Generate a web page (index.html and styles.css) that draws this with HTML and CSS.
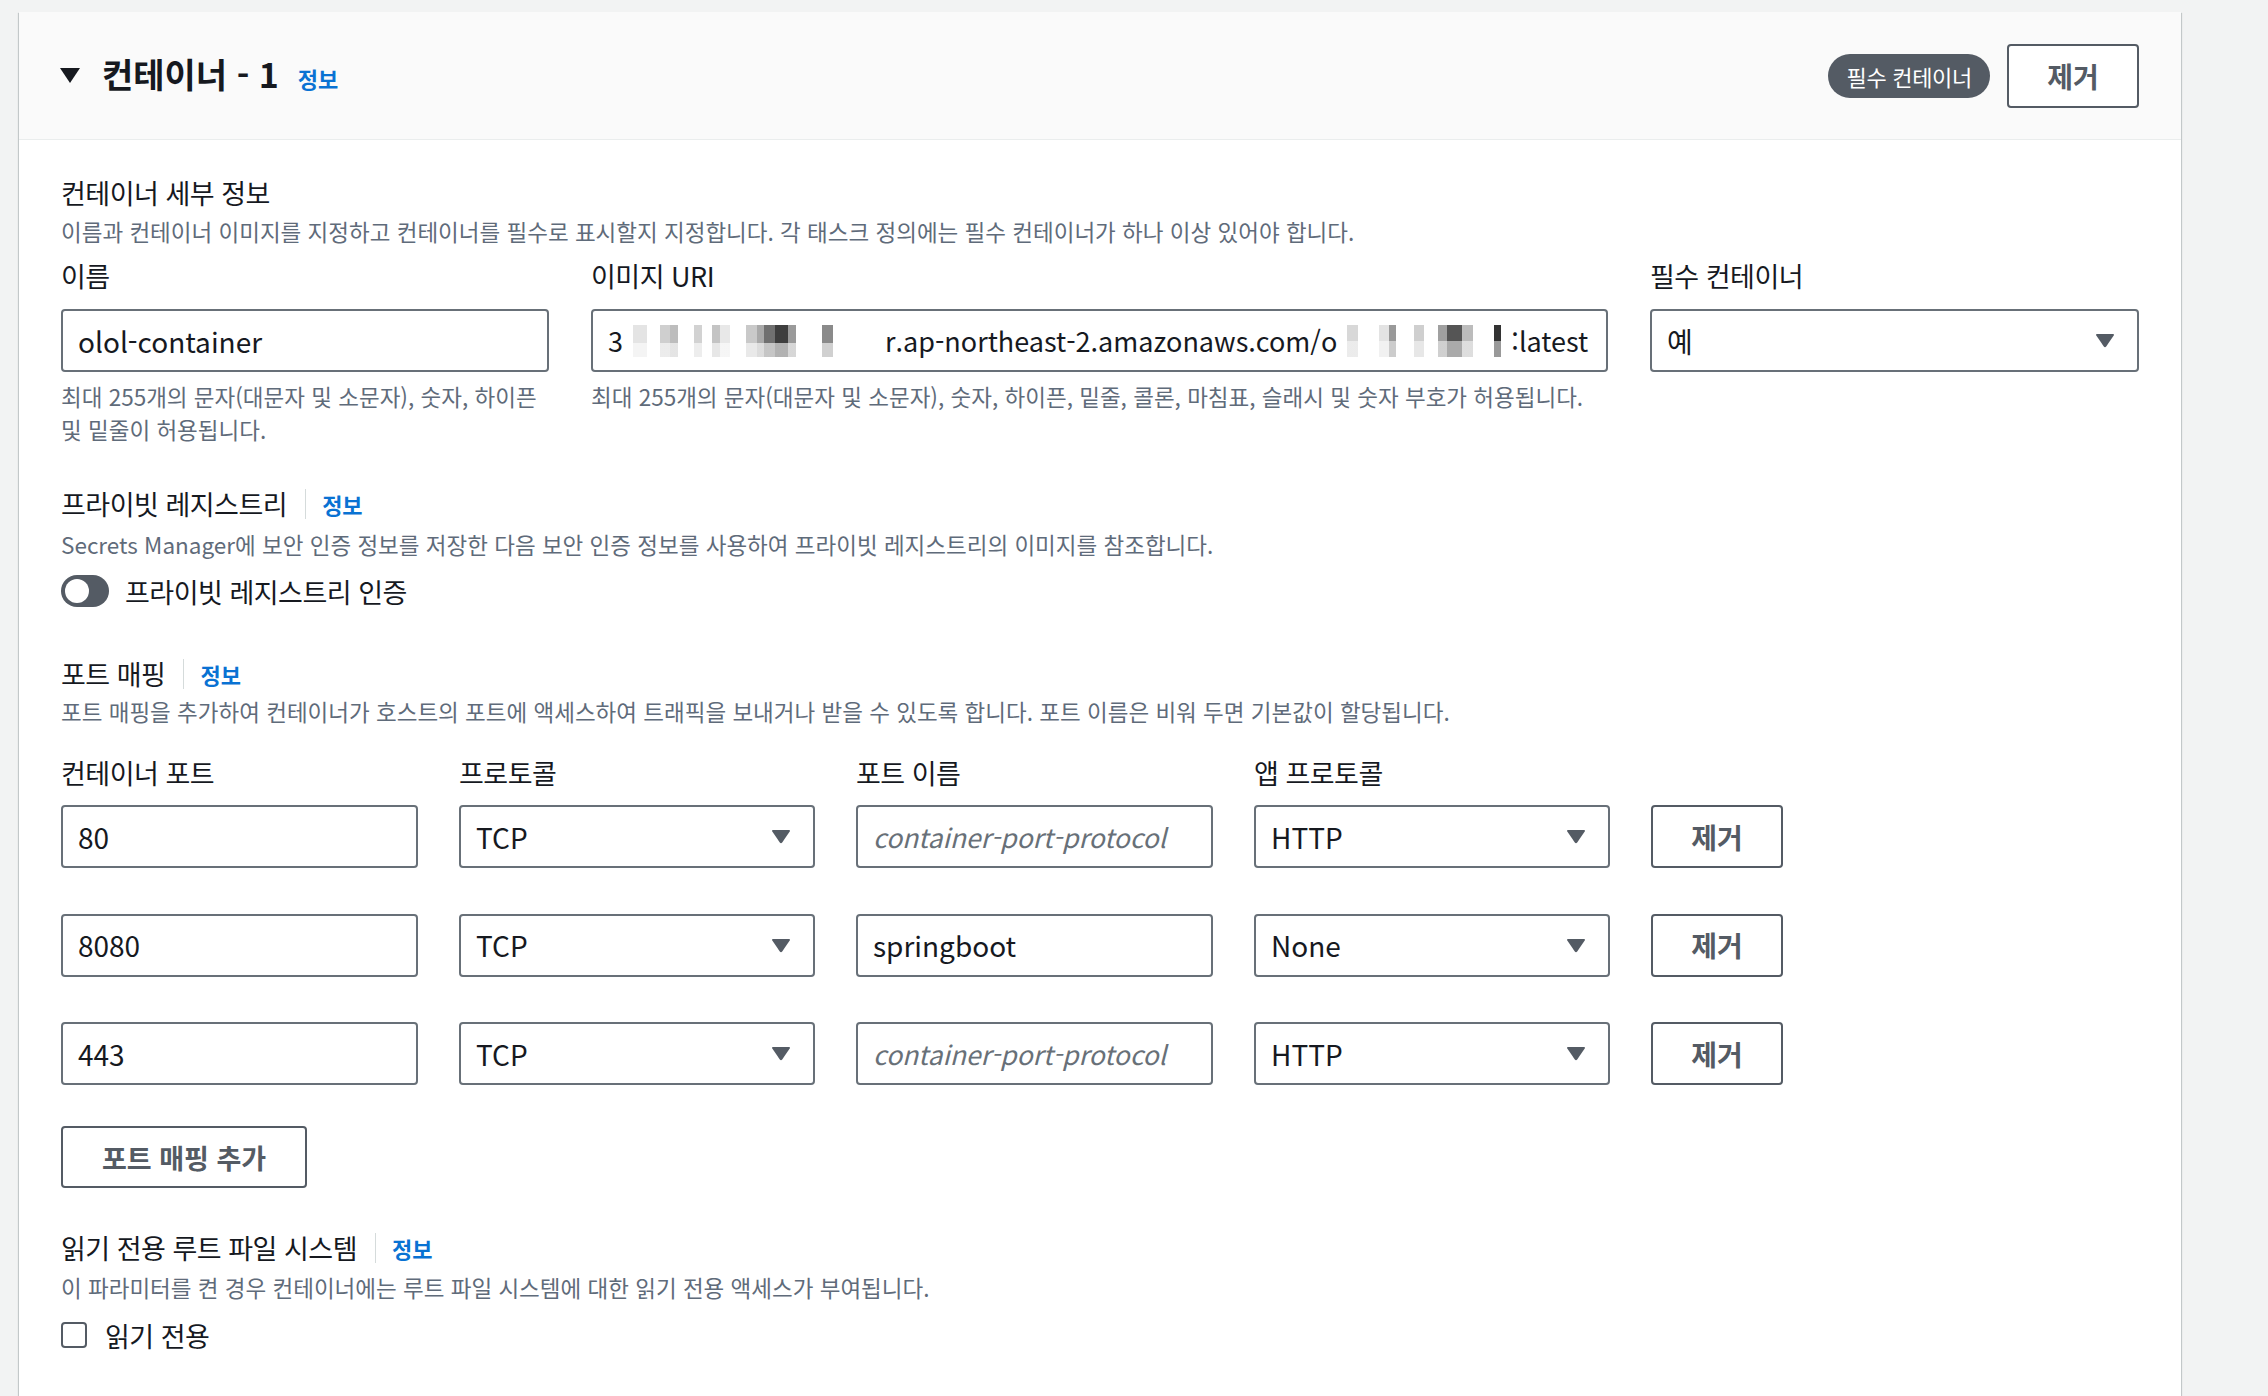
FILE: index.html
```html
<!DOCTYPE html>
<html lang="ko">
<head>
    <meta charset="UTF-8">
    <title>컨테이너 - 1</title>
    <link rel="stylesheet" href="styles.css">
</head>
<body>
<div class="page">
    <div class="card">
        <div class="card-header">
            <div class="header-left">
                <svg class="caret" width="20" height="15" viewBox="0 0 20 15"><path d="M0 0 H20 L10 15 Z" fill="#16191f"/></svg>
                <div class="title-group">
                    <h2 class="title">컨테이너 - 1</h2>
                    <a class="info">정보</a>
                </div>
            </div>
            <div class="header-right">
                <span class="badge">필수 컨테이너</span>
                <button class="btn btn-head">제거</button>
            </div>
        </div>

        <div class="card-body">
            <div class="section first">
                <div class="sec-head">컨테이너 세부 정보</div>
                <p class="desc">이름과 컨테이너 이미지를 지정하고 컨테이너를 필수로 표시할지 지정합니다. 각 태스크 정의에는 필수 컨테이너가 하나 이상 있어야 합니다.</p>
                <div class="detail-grid">
                    <div class="field">
                        <div class="label">이름</div>
                        <div class="box">olol-container</div>
                        <p class="help">최대 255개의 문자(대문자 및 소문자), 숫자, 하이픈<br>및 밑줄이 허용됩니다.</p>
                    </div>
                    <div class="field">
                        <div class="label">이미지 URI</div>
                        <div class="box uri">
                            <span>3</span>
                            <span class="mosaic m1"></span>
                            <span>r.ap-northeast-2.amazonaws.com/o</span>
                            <span class="mosaic m2"></span>
                            <span>:latest</span>
                        </div>
                        <p class="help">최대 255개의 문자(대문자 및 소문자), 숫자, 하이픈, 밑줄, 콜론, 마침표, 슬래시 및 숫자 부호가 허용됩니다.</p>
                    </div>
                    <div class="field">
                        <div class="label">필수 컨테이너</div>
                        <div class="box select">
                            <span>예</span>
                            <svg class="arrow" width="20" height="15" viewBox="0 0 20 15"><path d="M2 1 H18 Q19.5 1 18.7 2.4 L11.2 13.6 Q10 15 8.8 13.6 L1.3 2.4 Q0.5 1 2 1 Z" fill="#545b64"/></svg>
                        </div>
                    </div>
                </div>
            </div>

            <div class="section registry">
                <div class="sec-head">프라이빗 레지스트리<span class="sep"></span><a class="info">정보</a></div>
                <p class="desc">Secrets Manager에 보안 인증 정보를 저장한 다음 보안 인증 정보를 사용하여 프라이빗 레지스트리의 이미지를 참조합니다.</p>
                <div class="toggle-row">
                    <span class="toggle"></span>
                    <span class="toggle-label">프라이빗 레지스트리 인증</span>
                </div>
            </div>

            <div class="section ports">
                <div class="sec-head">포트 매핑<span class="sep"></span><a class="info">정보</a></div>
                <p class="desc">포트 매핑을 추가하여 컨테이너가 호스트의 포트에 액세스하여 트래픽을 보내거나 받을 수 있도록 합니다. 포트 이름은 비워 두면 기본값이 할당됩니다.</p>
                <div class="port-grid port-labels">
                    <div class="label">컨테이너 포트</div>
                    <div class="label">프로토콜</div>
                    <div class="label">포트 이름</div>
                    <div class="label">앱 프로토콜</div>
                </div>
                <div class="port-rows">
                    <div class="port-grid">
                        <div class="box">80</div>
                        <div class="box select"><span>TCP</span><svg class="arrow" width="20" height="15" viewBox="0 0 20 15"><path d="M2 1 H18 Q19.5 1 18.7 2.4 L11.2 13.6 Q10 15 8.8 13.6 L1.3 2.4 Q0.5 1 2 1 Z" fill="#545b64"/></svg></div>
                        <div class="box placeholder">container-port-protocol</div>
                        <div class="box select"><span>HTTP</span><svg class="arrow" width="20" height="15" viewBox="0 0 20 15"><path d="M2 1 H18 Q19.5 1 18.7 2.4 L11.2 13.6 Q10 15 8.8 13.6 L1.3 2.4 Q0.5 1 2 1 Z" fill="#545b64"/></svg></div>
                        <button class="btn btn-row">제거</button>
                    </div>
                    <div class="port-grid">
                        <div class="box">8080</div>
                        <div class="box select"><span>TCP</span><svg class="arrow" width="20" height="15" viewBox="0 0 20 15"><path d="M2 1 H18 Q19.5 1 18.7 2.4 L11.2 13.6 Q10 15 8.8 13.6 L1.3 2.4 Q0.5 1 2 1 Z" fill="#545b64"/></svg></div>
                        <div class="box">springboot</div>
                        <div class="box select"><span>None</span><svg class="arrow" width="20" height="15" viewBox="0 0 20 15"><path d="M2 1 H18 Q19.5 1 18.7 2.4 L11.2 13.6 Q10 15 8.8 13.6 L1.3 2.4 Q0.5 1 2 1 Z" fill="#545b64"/></svg></div>
                        <button class="btn btn-row">제거</button>
                    </div>
                    <div class="port-grid">
                        <div class="box">443</div>
                        <div class="box select"><span>TCP</span><svg class="arrow" width="20" height="15" viewBox="0 0 20 15"><path d="M2 1 H18 Q19.5 1 18.7 2.4 L11.2 13.6 Q10 15 8.8 13.6 L1.3 2.4 Q0.5 1 2 1 Z" fill="#545b64"/></svg></div>
                        <div class="box placeholder">container-port-protocol</div>
                        <div class="box select"><span>HTTP</span><svg class="arrow" width="20" height="15" viewBox="0 0 20 15"><path d="M2 1 H18 Q19.5 1 18.7 2.4 L11.2 13.6 Q10 15 8.8 13.6 L1.3 2.4 Q0.5 1 2 1 Z" fill="#545b64"/></svg></div>
                        <button class="btn btn-row">제거</button>
                    </div>
                </div>
                <button class="btn btn-add">포트 매핑 추가</button>
            </div>

            <div class="section readonly">
                <div class="sec-head">읽기 전용 루트 파일 시스템<span class="sep"></span><a class="info">정보</a></div>
                <p class="desc">이 파라미터를 켠 경우 컨테이너에는 루트 파일 시스템에 대한 읽기 전용 액세스가 부여됩니다.</p>
                <div class="check-row">
                    <span class="checkbox"></span>
                    <span class="check-label">읽기 전용</span>
                </div>
            </div>
        </div>
    </div>
</div>
</body>
</html>
```

FILE: styles.css
```css
body {
    margin: 0;
    background: #f2f3f3;
    font-family: "Noto Sans CJK KR", "Noto Sans", sans-serif;
    color: #16191f;
    overflow: hidden;
}
.page {
    padding: 12px 0 0 19px;
}
.card {
    width: 2162px;
    min-height: 1400px;
    background: #fff;
    box-shadow: 0 1px 1px 0 rgba(0, 28, 36, 0.3), 1px 1px 1px 0 rgba(0, 28, 36, 0.15), -1px 1px 1px 0 rgba(0, 28, 36, 0.15);
}
.card-header {
    height: 128px;
    box-sizing: border-box;
    display: flex;
    align-items: center;
    justify-content: space-between;
    padding: 0 42px 0 41px;
    background: #fafafa;
    border-bottom: 1px solid #eaeded;
}
.header-left {
    display: flex;
    align-items: center;
}
.caret {
    margin-right: 22px;
}
.title-group {
    display: flex;
    align-items: baseline;
}
.title {
    margin: 0;
    font-size: 34px;
    line-height: 40px;
    font-weight: 700;
}
.info {
    color: #0972d3;
    font-size: 22px;
    font-weight: 700;
    line-height: 40px;
    letter-spacing: 0;
}
.title-group .info {
    margin-left: 19px;
}
.header-right {
    display: flex;
    align-items: center;
}
.badge {
    height: 44px;
    line-height: 44px;
    padding: 0 18px;
    border-radius: 22px;
    background: #545b64;
    color: #fff;
    font-size: 22px;
    letter-spacing: -0.3px;
}
.btn {
    box-sizing: border-box;
    background: #fff;
    border: 2px solid #545b64;
    border-radius: 4px;
    color: #545b64;
    font-family: inherit;
    font-size: 28px;
    font-weight: 700;
    padding: 0;
    cursor: pointer;
}
.btn-head {
    width: 132px;
    height: 64px;
    margin-left: 17px;
}
.card-body {
    padding: 33px 42px 40px 42px;
}
.section {
    margin-top: 38px;
}
.section.first {
    margin-top: 0;
}
.section.ports {
    margin-top: 43px;
}
.section.readonly {
    margin-top: 40px;
}
.sec-head {
    display: flex;
    align-items: center;
    font-size: 27px;
    letter-spacing: -0.5px;
    line-height: 40px;
}
.sep {
    width: 1px;
    height: 30px;
    background: #d5dbdb;
    margin: 0 16px 0 18px;
}
.desc {
    margin: 2px 0 0;
    font-size: 22.5px;
    line-height: 32px;
    color: #5f6b7a;
}
.registry .desc {
    margin-top: 4px;
}
.ports .desc {
    margin-top: 1px;
}
.readonly .desc {
    margin-top: 3px;
}
.detail-grid {
    display: grid;
    grid-template-columns: 488px 1017px 489px;
    column-gap: 42px;
    margin-top: 9px;
}
.label {
    font-size: 27px;
    letter-spacing: -0.5px;
    line-height: 40px;
    margin-bottom: 13px;
}
.box {
    height: 63px;
    box-sizing: border-box;
    border: 2px solid #687078;
    border-radius: 4px;
    padding: 0 15px;
    display: flex;
    align-items: center;
    font-size: 28px;
    white-space: nowrap;
    overflow: hidden;
}
.box.select {
    justify-content: space-between;
    padding-right: 22px;
}
.box.placeholder {
    font-style: italic;
    font-size: 26.5px;
    color: #687078;
}
.box.uri {
    font-size: 27px;
}
.uri span {
    flex: none;
}
.mosaic {
    display: inline-block;
    height: 32px;
}
.m1 {
    width: 262px;
    background:
        linear-gradient(180deg, rgba(255,255,255,0) 0 55%, rgba(255,255,255,0.6) 55% 100%),
        linear-gradient(90deg, #fff 0 4%, #e4e4e4 4% 9%, #fff 9% 14%, #cfcfcf 14% 18%, #bdbdbd 18% 21%, #fff 21% 27%, #d2d2d2 27% 30%, #fff 30% 34%, #c4c4c4 34% 37%, #e8e8e8 37% 41%, #fff 41% 47%, #c9c9c9 47% 51%, #a9a9a9 51% 54%, #707070 54% 58%, #3e3e3e 58% 63%, #9a9a9a 63% 66%, #fff 66% 76%, #8a8a8a 76% 80%, #fff 80% 100%);
}
.m2 {
    width: 174px;
    background:
        linear-gradient(180deg, rgba(255,255,255,0) 0 50%, rgba(255,255,255,0.5) 50% 100%),
        linear-gradient(90deg, #fff 0 6%, #d8d8d8 6% 12%, #fff 12% 24%, #e3e3e3 24% 30%, #999 30% 34%, #fff 34% 44%, #cfcfcf 44% 50%, #fff 50% 58%, #a0a0a0 58% 63%, #555 63% 72%, #bcbcbc 72% 78%, #fff 78% 90%, #333 90% 94%, #fff 94% 100%);
}
.help {
    margin: 8px 0 0;
    font-size: 22.5px;
    line-height: 33px;
    color: #5f6b7a;
}
.toggle-row,
.check-row {
    display: flex;
    align-items: center;
    height: 40px;
    font-size: 27px;
    letter-spacing: -0.5px;
}
.toggle-row {
    margin-top: 11px;
}
.toggle {
    position: relative;
    width: 48px;
    height: 32px;
    border-radius: 16px;
    background: #545b64;
}
.toggle::after {
    content: "";
    position: absolute;
    left: 4px;
    top: 4px;
    width: 24px;
    height: 24px;
    border-radius: 50%;
    background: #fff;
}
.toggle-label {
    margin-left: 16px;
}
.port-grid {
    display: grid;
    grid-template-columns: 357px 356px 357px 356px 132px;
    column-gap: 41px;
}
.port-labels {
    margin-top: 26px;
}
.port-labels .label {
    margin-bottom: 12px;
}
.port-rows {
    display: flex;
    flex-direction: column;
    gap: 45.5px;
}
.btn-row {
    height: 63px;
}
.btn-add {
    display: block;
    width: 246px;
    height: 62px;
    margin-top: 41px;
    font-size: 27px;
}
.check-row {
    margin-top: 12px;
}
.checkbox {
    width: 26px;
    height: 26px;
    box-sizing: border-box;
    border: 2px solid #545b64;
    border-radius: 4px;
}
.check-label {
    margin-left: 18px;
}
```
